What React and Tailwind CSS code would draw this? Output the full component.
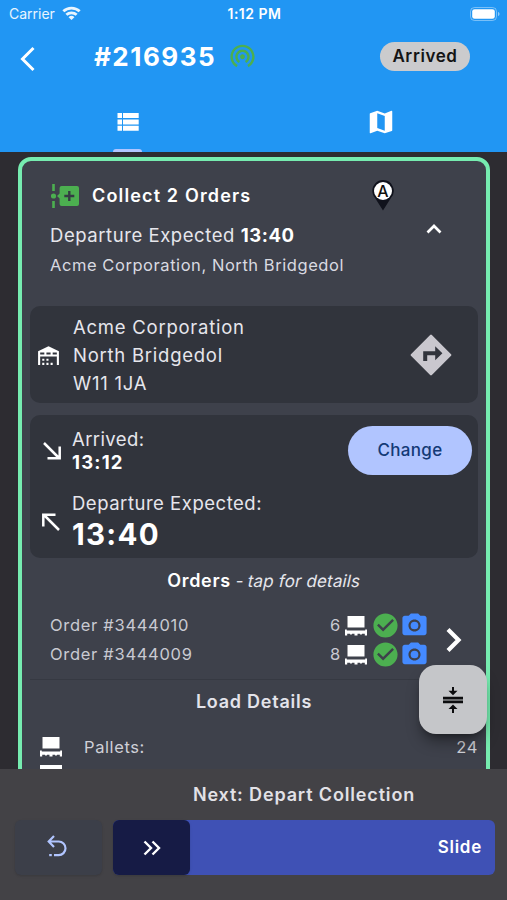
import { MdPhotoCamera, MdCheckCircle, MdWifiTethering } from 'react-icons/md'

const orders = [
  { id: '3444010', pallets: 6 },
  { id: '3444009', pallets: 8 },
]

function WifiIcon() {
  return (
    <svg viewBox="0 0 20 15" className="w-[19px] h-[15px]" fill="none" stroke="currentColor" strokeWidth="2.9">
      <path d="M1.4 5.2a12.4 12.4 0 0 1 17.2 0" />
      <path d="M4.6 8.9a7.8 7.8 0 0 1 10.8 0" />
      <path d="M10 14.4L6.9 11.400a4.5 4.5 0 0 1 6.2 0z" fill="currentColor" stroke="none" />
    </svg>
  )
}

function BatteryIcon() {
  return (
    <svg viewBox="0 0 30 14" className="w-[30px] h-[14px]">
      <rect x="0.5" y="0.5" width="26" height="13" rx="4" fill="none" stroke="#fff" strokeOpacity="0.4" />
      <rect x="2.2" y="2.2" width="22.6" height="9.6" rx="2.4" fill="#fff" />
      <path d="M28 5v4c1-.3 1.5-1.100 1.500-2s-.5-1.700-1.500-2z" fill="#fff" fillOpacity="0.5" />
    </svg>
  )
}

function MapIcon() {
  return (
    <svg viewBox="0 0 24 24" className="w-[30px] h-[30px]" fill="#fff">
      <path d="M20.5 3l-.16.03L15 5.1 9 3 3.36 4.9c-.21.07-.36.25-.36.48V20.5c0 .28.22.5.5.5l.16-.03L9 18.9l6 2.1 5.64-1.9c.21-.07.36-.25.36-.48V3.5c0-.28-.22-.5-.5-.5zM15 19l-6-2.110V5l6 2.110V19z" />
    </svg>
  )
}

function CollectIcon() {
  return (
    <svg viewBox="0 0 28 24" className="w-7 h-6" fill="#4caf50">
      <path d="M1.200 0h2.600v7h-2.600zM1.200 17h2.600v7h-2.600z" />
      <circle cx="2.500" cy="12" r="2.600" />
      <path d="M6 12l2.600-2.400v-5.600a2 2 0 0 1 2-2h15.400a2 2 0 0 1 2 2v16a2 2 0 0 1-2 2h-15.400a2 2 0 0 1-2-2v-5.600z" />
      <path d="M17.100 7h2.400v3.800h3.800v2.400h-3.800v3.800h-2.400v-3.800h-3.800v-2.400h3.800z" fill="#343b43" />
    </svg>
  )
}

function PinIcon() {
  return (
    <svg viewBox="0 0 22 31" className="w-[22px] h-[31px]">
      <path d="M11 0a10.700 10.700 0 0 0-10.700 10.700c0 2.800 1.100 5.300 2.800 7.200l7.900 12.600 7.900-12.600a10.700 10.700 0 0 0-7.900-17.900z" fill="#10121c" />
      <circle cx="11" cy="11" r="9" fill="#fff" />
      <text x="11" y="16.700" textAnchor="middle" fontSize="16" fontWeight="500" fill="#111">A</text>
    </svg>
  )
}

function WarehouseIcon() {
  return (
    <svg viewBox="0 0 24 24" className="w-[25px] h-[25px] mt-0.5" fill="#fff">
      <path d="M6 19H8V21H6V19M12 3L2 8V21H4V13H20V21H22V8L12 3M8 11H4V9H8V11M14 11H10V9H14V11M20 11H16V9H20V11M6 15H8V17H6V15M10 15H12V17H10V15M10 19H12V21H10V19M14 19H16V21H14V19Z" />
    </svg>
  )
}

function DirectionsIcon() {
  return (
    <svg viewBox="0 0 42 42" className="w-[42px] h-[42px]">
      <path d="M21 1.800L40.200 21 21 40.200 1.800 21z" fill="#c9c7ce" stroke="#c9c7ce" strokeWidth="2.400" strokeLinejoin="round" />
      <path d="M13.200 27V17.200h12v-5l7.200 7-7.200 7v-5h-8V27z" fill="#31343c" />
    </svg>
  )
}

function PalletIcon() {
  return (
    <svg viewBox="0 0 22 20" className="w-[22px] h-5" fill="#fff">
      <path d="M2.500 0h17v11.500h-17z" />
      <path d="M0 13.500h1.800v1h18.400v-1h1.800v6h-2.200v-1.700h-2.600l-1.200 1.200-1.200-1.200h-2.300v1.700h-3v-1.700h-2.300l-1.200 1.200-1.200-1.200h-2.600v1.700h-2.200z" />
    </svg>
  )
}

function Header() {
  return (
    <header className="h-[152px] bg-[#2196f3] flex flex-col">
      {/* Status bar */}
      <div className="h-[27px] grid grid-cols-3 items-center pl-[9px] pr-[7px]">
        <div className="flex items-center gap-[7px] text-[14px] text-white/90">
          <span>Carrier</span>
          <WifiIcon />
        </div>
        <span className="text-center font-semibold text-[14px] tracking-[0.5px]">1:12 PM</span>
        <div className="flex justify-end"><BatteryIcon /></div>
      </div>

      {/* Title */}
      <div className="h-[58px] flex items-center px-[19px]">
        <svg viewBox="0 0 16 26" className="w-4 h-[26px] mt-1.5" fill="none" stroke="#fff" strokeWidth="3">
          <path d="M14.500 2L3.500 13l11 11" />
        </svg>
        <h1 className="ml-[59px] mt-px text-[26px] font-bold tracking-[1.500px] leading-none">#216935</h1>
        <MdWifiTethering className="ml-[12px] -mt-0.5 w-[29px] h-[29px] text-[#4caf50]" />
        <span className="ml-auto mr-[18px] mt-px h-[29px] w-[90px] rounded-full bg-[#cbcbcd] text-[#141414] text-[17px] font-semibold tracking-[0.6px] flex items-center justify-center">
          Arrived
        </span>
      </div>

      {/* Tabs */}
      <div className="flex-1 grid grid-cols-2">
        <div className="flex flex-col items-center justify-end">
          <svg viewBox="0 0 22 18" className="w-[22px] h-[18px] mb-[18px] ml-[3px]" fill="#fff">
            <path d="M0.500 0h4.500v5h-4.500zM6 0h15.700v5h-15.700zM0.500 6.400h4.500v5h-4.500zM6 6.400h15.700v5h-15.700zM0.500 12.800h4.500v5h-4.500zM6 12.800h15.700v5h-15.700z" />
          </svg>
          <span className="w-[29px] h-[3px] ml-px rounded-t-full bg-[#b1c5ff]" />
        </div>
        <div className="flex items-end justify-center pb-[15px] pl-px">
          <MapIcon />
        </div>
      </div>
    </header>
  )
}

function StopHeader() {
  return (
    <div className="h-[145px] pl-7 pr-[44px] flex justify-between">
      <div className="pt-[22px]">
        <div className="h-[25px] flex items-center gap-[13px] pl-px">
          <CollectIcon />
          <h2 className="text-[18px] font-semibold tracking-[1.150px] whitespace-nowrap">Collect 2 Orders</h2>
        </div>
        <p className="mt-[13px] text-[18.500px] leading-[28px] tracking-[0.560px] text-[#e6e6ec] whitespace-nowrap">
          Departure Expected <b className="font-bold text-white">13:40</b>
        </p>
        <p className="mt-[3px] text-[16.500px] leading-[26px] tracking-[0.560px] text-[#d9dae1] whitespace-nowrap">
          Acme Corporation, North Bridgedol
        </p>
      </div>
      <div className="pt-[19px] flex flex-col items-end">
        <div className="mr-[48px]"><PinIcon /></div>
        <svg viewBox="0 0 16 10" className="mt-[13px] w-4 h-2.5" fill="none" stroke="#fff" strokeWidth="2.700">
          <path d="M1.500 8.500L8 2l6.500 6.500" />
        </svg>
      </div>
    </div>
  )
}

function Address() {
  return (
    <div className="mx-2 h-[97px] rounded-[10px] bg-[#31343c] flex items-center pl-[6px] pr-[26px]">
      <WarehouseIcon />
      <div className="ml-[12px] text-[18.500px] leading-[28px] tracking-[0.750px] text-[#e6e6ec]">
        <p>Acme Corporation</p>
        <p>North Bridgedol</p>
        <p>W11 1JA</p>
      </div>
      <div className="ml-auto"><DirectionsIcon /></div>
    </div>
  )
}

function Times() {
  return (
    <div className="mx-2 mt-3 h-[143px] rounded-[10px] bg-[#31343c] pl-[12px] pr-1.5 pt-[11px]">
      <div className="h-12 flex items-center">
        <svg viewBox="0 0 18 18" className="w-[18px] h-[18px] ml-px mt-0.5" fill="none" stroke="#fff" strokeWidth="2.500">
          <path d="M1 1l15 15M4.500 16.300h12.200V4.500" />
        </svg>
        <div className="ml-[11px] mt-0.5 leading-[23px]">
          <p className="text-[18.500px] tracking-[0.4px] text-[#e6e6ec]">Arrived:</p>
          <p className="text-[18.500px] tracking-[1.200px] font-bold">13:12</p>
        </div>
        <button className="ml-auto w-[124px] h-[49px] pt-[2px] rounded-full bg-[#b1c5ff] text-[#143a76] text-[17px] font-medium tracking-[0.3px]">
          Change
        </button>
      </div>
      <div className="mt-[17px] flex items-center">
        <svg viewBox="0 0 18 18" className="w-[18px] h-[18px]" fill="none" stroke="#fff" strokeWidth="2.500">
          <path d="M17 17L2 2M13.500 1.700H1.300V13.500" />
        </svg>
        <div className="ml-3">
          <p className="text-[18.500px] leading-[25px] tracking-[0.520px] text-[#e6e6ec]">Departure Expected:</p>
          <p className="text-[29.500px] leading-[36px] font-bold tracking-[1.300px]">13:40</p>
        </div>
      </div>
    </div>
  )
}

function Orders() {
  return (
    <div className="mx-2 h-[122px] border-b border-[#363942]">
      <p className="pt-[11px] pl-5 text-center text-[18px] leading-6 whitespace-nowrap">
        <b className="font-semibold tracking-[0.700px]">Orders</b>
        <span className="text-[17px] text-[#e6e6ec]"> - </span>
        <span className="inline-block -skew-x-12 text-[17px] tracking-[0.150px] text-[#e6e6ec]">tap for details</span>
      </p>
      <div className="mt-[18px] flex items-center pl-5 pr-[16px]">
        <div className="flex-1">
          {orders.map(o => (
            <div key={o.id} className="h-[29px] flex items-center text-[16.500px] tracking-[0.700px] text-[#c9cad2]">
              <span className="flex-1">Order #{o.id}</span>
              <span className="mr-1">{o.pallets}</span>
              <PalletIcon />
              <MdCheckCircle className="ml-1 w-[29px] h-[29px] text-[#4caf50]" />
              <MdPhotoCamera className="w-[29px] h-[29px] text-[#448aff]" />
            </div>
          ))}
        </div>
        <svg viewBox="0 0 16 24" className="ml-[17px] w-4 h-6" fill="none" stroke="#fff" strokeWidth="4.200">
          <path d="M2 1.500L12.500 12 2 22.500" />
        </svg>
      </div>
    </div>
  )
}

function LoadDetails() {
  return (
    <div className="mx-2 text-[#e3e3ea]">
      <h3 className="pt-[10px] text-center text-[18px] leading-6 font-semibold tracking-[0.750px]">Load Details</h3>
      <div className="mt-[22px] flex items-center pl-[10px] text-[16.500px] leading-[22px] tracking-[0.600px] text-[#cfd0d7]">
        <PalletIcon />
        <span className="ml-[22px]">Pallets:</span>
        <span className="ml-auto">24</span>
      </div>
      <div className="mt-[7px] ml-[10px] w-[22px] h-5 bg-white" />
    </div>
  )
}

function Footer() {
  return (
    <footer className="h-[131px] bg-[#434246] px-3">
      <p className="h-[51px] pl-[101px] text-center text-[18px] leading-[51px] font-semibold tracking-[0.850px] text-[#e2e1e6]">
        Next: Depart Collection
      </p>
      <div className="flex h-[55px]">
        <button className="ml-[3px] w-[87px] rounded-md bg-[#3c3f49] flex items-center justify-center pr-1 pb-[3px] shadow-sm">
          <svg viewBox="0 0 20 22" className="w-5 h-[22px]" fill="none" stroke="#b1c5ff" strokeWidth="2.200">
            <path d="M7 1L1.700 6.500 7 12M1.700 6.500h10a6.800 6.800 0 0 1 0 13.600H7" />
            <path d="M2.200 20.100h2.600" />
          </svg>
        </button>
        <div className="ml-[11px] flex-1 rounded-md bg-[#3f51b5] flex items-center justify-between pr-[13px]">
          <div className="w-[77px] h-full rounded-md bg-[#161b45] flex items-center justify-center shadow">
            <svg viewBox="0 0 18 16" className="w-[18px] h-4" fill="none" stroke="#fff" strokeWidth="2.400">
              <path d="M1.500 1.500L8 8l-6.500 6.500M9.500 1.500L16 8l-6.500 6.500" />
            </svg>
          </div>
          <span className="text-[17px] font-semibold tracking-[0.750px]">Slide</span>
        </div>
      </div>
    </footer>
  )
}

export default function App() {
  return (
    <div className="relative w-[507px] h-[900px] overflow-hidden bg-[#2d2c31] text-white font-['Inter',sans-serif] flex flex-col">
      <Header />
      <main className="h-[617px] overflow-hidden pt-[5px] pl-[18px] pr-[17px]">
        <div className="h-[700px] rounded-[13px] border-4 border-[#76ecb0] bg-[#3e414b]">
          <StopHeader />
          <Address />
          <Times />
          <Orders />
          <LoadDetails />
        </div>
      </main>
      <Footer />

      {/* Collapse button */}
      <button className="absolute left-[419px] top-[665px] w-[68px] h-[69px] rounded-[17px] bg-[#c5c6c9] shadow-lg shadow-black/40 flex items-center justify-center">
        <svg viewBox="0 0 20 26" className="w-5 h-[26px]" fill="#0c0c0e">
          <path d="M0 9.800h20v2.700H0zM0 13.500h20v2.700H0z" />
          <path d="M9 0h2v3.800h3.500L10 8.300 5.500 3.800H9zM9 26h2v-4h3.500L10 17.500 5.500 22H9z" />
        </svg>
      </button>
    </div>
  )
}
